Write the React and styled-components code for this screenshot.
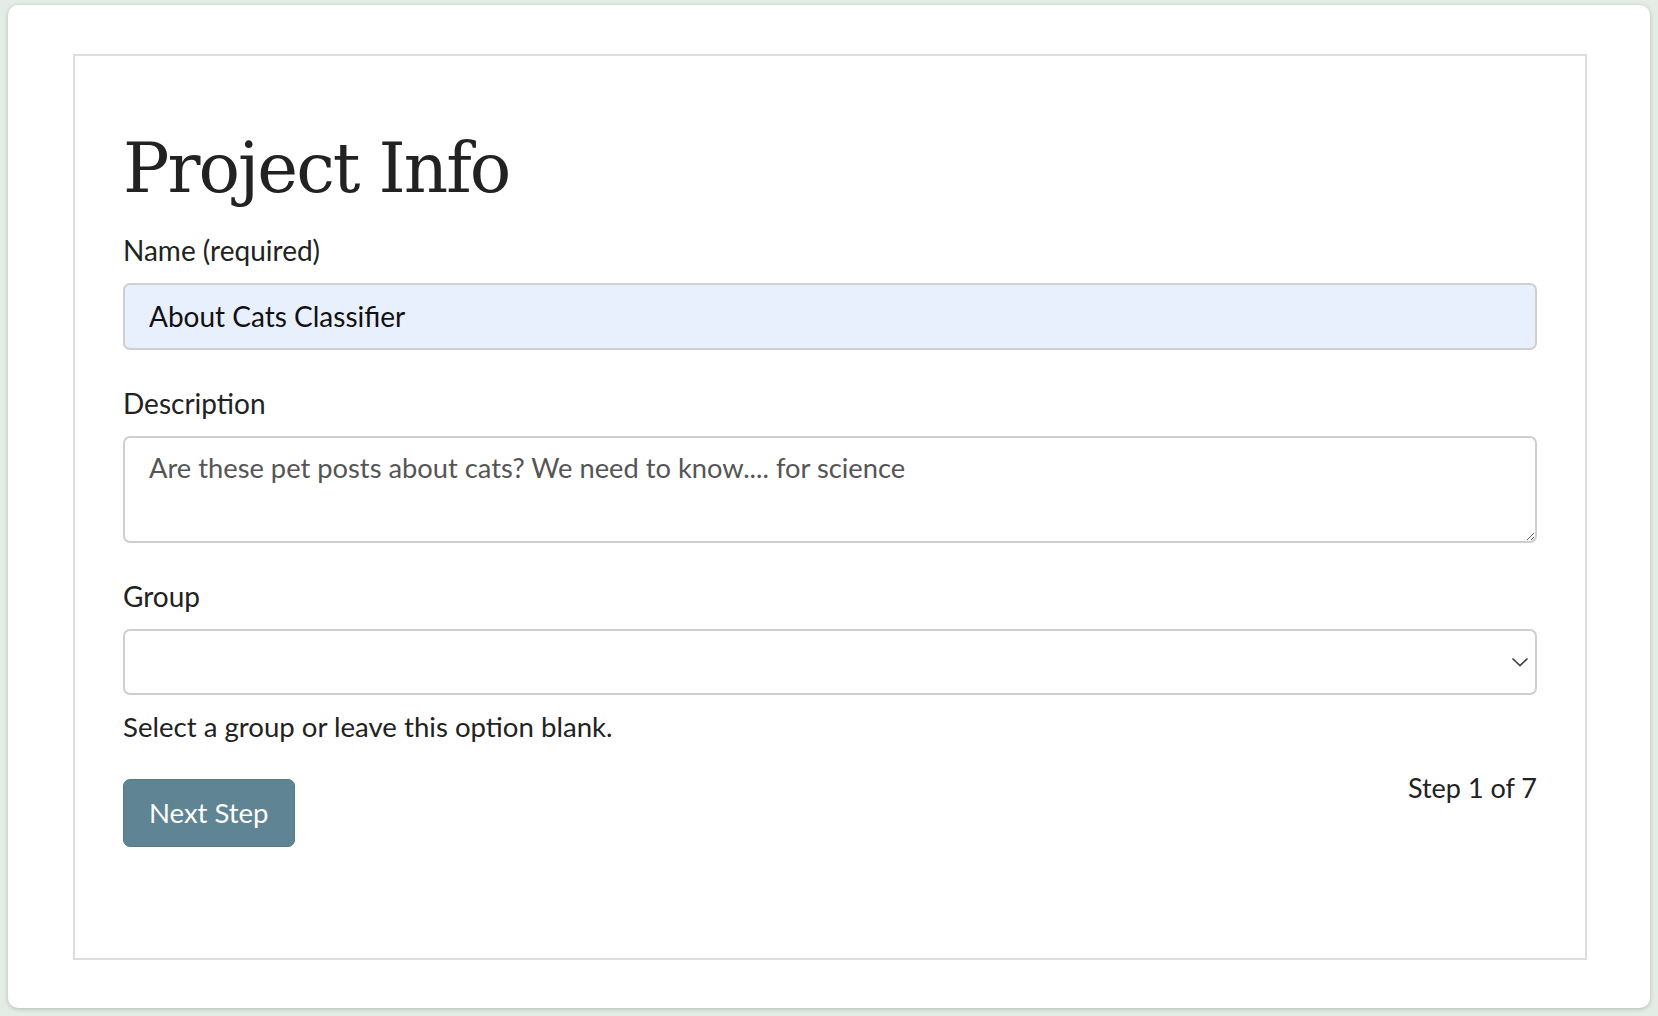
import React from "react";
import styled, { createGlobalStyle } from "styled-components";

const Global = createGlobalStyle`
  html, body { margin: 0; padding: 0; }
  body {
    background: #e3ede5;
    font-family: Lato, "Noto Sans", sans-serif;
    color: #222;
  }
  * { box-sizing: border-box; }
`;

const Page = styled.div`
  padding: 5px 8px 8px 8px;
  height: 1016px;
`;

const Card = styled.div`
  background: #fff;
  border-radius: 10px;
  box-shadow: 0 1px 4px rgba(0, 0, 0, 0.22);
  height: 1003px;
  padding: 49px 63px 48px 65px;
`;

const Panel = styled.form`
  border: 2px solid #dddddd;
  height: 100%;
  padding: 71px 48px 0 48px;
  display: flex;
  flex-direction: column;
`;

const Title = styled.h1`
  margin: 0 0 19px 0;
  font-family: "DejaVu Serif", "Liberation Serif", serif;
  font-weight: 400;
  font-size: 69px;
  line-height: 1.2;
  letter-spacing: -2px;
  color: #222;
`;

const Label = styled.label`
  display: block;
  font-size: 28px;
  line-height: 42px;
  margin-bottom: 12px;
  color: #222;
`;

const Field = styled.div`
  display: flex;
  flex-direction: column;
  margin-bottom: ${(p) => p.$gap ?? 32}px;
`;

const TextInput = styled.input`
  width: 100%;
  height: 67px;
  border: 2px solid #cfcfcf;
  border-radius: 7px;
  background: ${(p) => (p.$filled ? "#e8f0fe" : "#fff")};
  padding: 0 24px;
  font-family: Lato, "Noto Sans", sans-serif;
  font-size: 28px;
  color: #111;
  outline: none;
`;

const TextArea = styled.textarea`
  width: 100%;
  height: 107px;
  border: 2px solid #cfcfcf;
  border-radius: 7px;
  background: #fff;
  padding: 10px 24px;
  font-family: Lato, "Noto Sans", sans-serif;
  font-size: 27.3px;
  line-height: 1.5;
  color: #555;
  outline: none;
  resize: vertical;
`;

const SelectWrap = styled.div`
  position: relative;
  width: 100%;
`;

const Select = styled.select`
  appearance: none;
  -webkit-appearance: none;
  width: 100%;
  height: 66px;
  border: 2px solid #cfcfcf;
  border-radius: 7px;
  background: #fff;
  padding: 0 24px;
  font-family: Lato, "Noto Sans", sans-serif;
  font-size: 28px;
  color: #222;
  outline: none;
`;

const Chevron = styled.svg`
  position: absolute;
  right: 7px;
  top: 50%;
  transform: translateY(-50%);
  pointer-events: none;
`;

const Help = styled.p`
  margin: 0 0 19px 0;
  font-size: 27.6px;
  line-height: 42px;
  color: #222;
`;

const Actions = styled.div`
  display: flex;
  justify-content: space-between;
  align-items: flex-start;
`;

const Button = styled.button`
  margin-top: 12px;
  height: 68px;
  padding: 0 25px;
  border: 1px solid #567a88;
  border-radius: 7px;
  background: #5f8493;
  color: #fff;
  font-family: Lato, "Noto Sans", sans-serif;
  font-size: 27.5px;
  cursor: pointer;
`;

const StepText = styled.span`
  font-size: 27px;
  line-height: 42px;
  color: #222;
`;

export default function App() {
  return (
    <>
      <Global />
      <Page>
        <Card>
          <Panel onSubmit={(e) => e.preventDefault()}>
            <Title>Project Info</Title>
            <Field>
              <Label htmlFor="name">Name (required)</Label>
              <TextInput id="name" $filled defaultValue="About Cats Classifier" />
            </Field>
            <Field>
              <Label htmlFor="desc">Description</Label>
              <TextArea
                id="desc"
                defaultValue="Are these pet posts about cats? We need to know.... for science"
              />
            </Field>
            <Field $gap={11}>
              <Label htmlFor="group">Group</Label>
              <SelectWrap>
                <Select id="group" defaultValue="">
                  <option value=""></option>
                </Select>
                <Chevron width="20" height="20" viewBox="0 0 20 20">
                  <path d="M2.5 6.5 L10 13.5 L17.5 6.5" fill="none" stroke="#444" strokeWidth="1.7" />
                </Chevron>
              </SelectWrap>
            </Field>
            <Help>Select a group or leave this option blank.</Help>
            <Actions>
              <Button type="submit">Next Step</Button>
              <StepText>Step 1 of 7</StepText>
            </Actions>
          </Panel>
        </Card>
      </Page>
    </>
  );
}
